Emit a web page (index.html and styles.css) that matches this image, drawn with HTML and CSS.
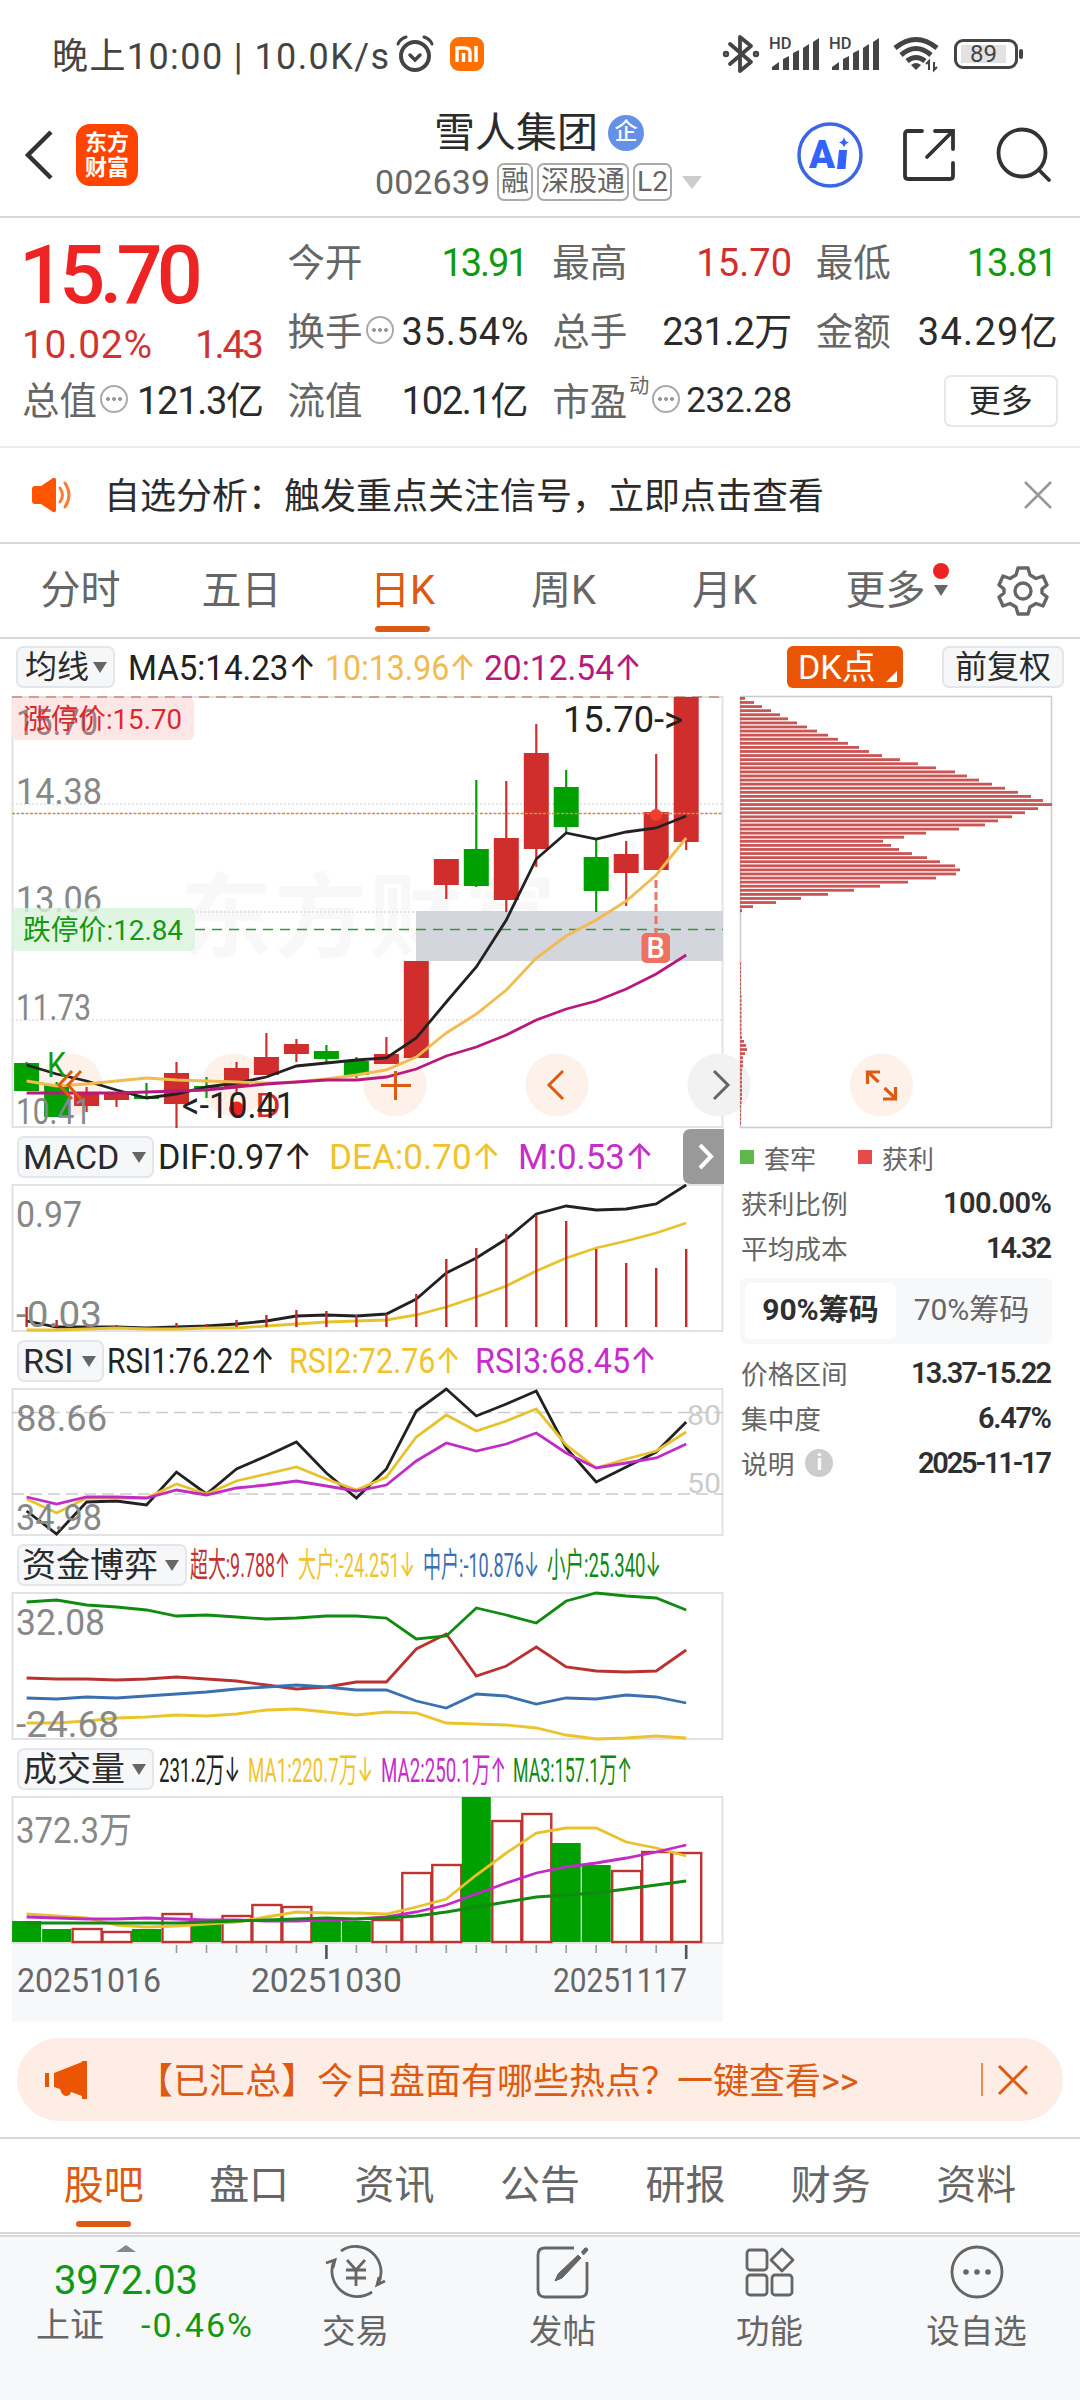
FILE: index.html
```html
<!DOCTYPE html>
<html lang="zh-CN">
<head>
  <meta charset="UTF-8" />
  <meta name="viewport" content="width=device-width, initial-scale=1.0"/>
  <title>雪人集团 002639</title>
  <link rel="stylesheet" href="styles.css">
</head>
<body>
  <div class="status-bar">
    <span class="status-time" data-w="337">晚上10:00 | 10.0K/s</span>
    <svg class="icon-clock" width="38" height="38" viewBox="0 0 38 38" fill="none" stroke="#444" stroke-width="4" stroke-linecap="round"><circle cx="19" cy="21" r="14"/><path d="M14 20l5 5 5-5" stroke-width="3.5"/><path d="M2 9Q4 4 10 2M36 9Q34 4 28 2" stroke-width="3"/></svg>
    <span class="mi"><svg width="24" height="16" viewBox="0 0 24 16" fill="none" stroke="#fff" stroke-width="3.4"><path d="M2 16V2h8q5 0 5 5v9M8.5 16V7M21 16V0"/></svg></span>
    <div class="status-right">
      <svg width="38" height="40" viewBox="0 0 38 40" fill="none" stroke="#444" stroke-width="3.8" stroke-linejoin="round" stroke-linecap="round"><path d="M8 10l21 18-11 9V3l11 9L8 30"/><circle cx="4" cy="20" r="1.3"/><circle cx="34" cy="20" r="1.3"/></svg>
      <svg class="sig1" width="52" height="36" viewBox="0 0 52 36"><text x="0" y="13" class="hd">HD</text><g fill="#444"><path d="M3 34V31L10 26V34Z"/><path d="M14 34V23L20 20V34Z"/><path d="M24 34V17L30 14V34Z"/><path d="M34 34V12L40 8V34Z"/><path d="M44 34V6L50 2V34Z"/></g></svg>
      <svg class="sig2" width="52" height="36" viewBox="0 0 52 36"><text x="0" y="13" class="hd">HD</text><g fill="#444"><path d="M3 34V31L10 26V34Z"/><path d="M14 34V23L20 20V34Z"/><path d="M24 34V17L30 14V34Z"/><path d="M34 34V12L40 8V34Z"/><path d="M44 34V6L50 2V34Z"/></g></svg>
      <svg class="wifi" width="46" height="36" viewBox="0 0 46 36" fill="none" stroke="#444" stroke-width="5"><path d="M2 12Q23-5 44 12"/><path d="M8 19Q23 6 38 19"/><path d="M14 25Q23 18 32 25"/><path d="M23 34l-5-5q5-4 10 0z" fill="#444" stroke="none"/><path d="M36 34v-9l-3 3M41 26v8l3-3" stroke-width="2"/></svg>
      <span class="battery"><span>89</span></span>
    </div>
  </div>

  <div class="header">
    <svg class="back" width="30" height="50" viewBox="0 0 30 50" fill="none" stroke="#333" stroke-width="4.5"><path d="M27 2L4 25l23 23"/></svg>
    <div class="logo">东方<br>财富</div>
    <div class="stock">
      <div class="stock-name">雪人集团<span class="qi">企</span></div>
      <div class="stock-code"><span data-w="115">002639</span><i>融</i><i>深股通</i><i>L2</i><b class="caret"></b></div>
    </div>
    <svg width="66" height="66" viewBox="0 0 66 66"><circle cx="33" cy="33" r="31" fill="#fff" stroke="#3c66e4" stroke-width="3.5"/><text x="12" y="46" class="ai" textLength="26" lengthAdjust="spacingAndGlyphs">A</text><path d="M42 28h8l-1.500 19h-8.500zM47 15q1 5 5 5.500q-4 1-5 5q-1-4-5-5q4-1 5-5.500z" fill="#3463fb"/></svg>
    <svg class="share" width="54" height="54" viewBox="0 0 54 54" fill="none" stroke="#333" stroke-width="3.8" stroke-linecap="round"><path d="M20 3H6q-3 0-3 3v42q0 3 3 3h42q3 0 3-3V35M33 3h18v18M50 4L25 29"/></svg>
    <svg class="search" width="56" height="56" viewBox="0 0 56 56" fill="none" stroke="#333" stroke-width="3.8" stroke-linecap="round"><circle cx="25" cy="26" r="23.500"/><path d="M42 43l10 10"/></svg>
  </div>

  <div class="quote">
    <div class="price">
      <div class="last">15.70</div>
      <div class="change"><span data-w="130">10.02%</span><span data-w="69">1.43</span></div>
    </div>
    <div class="cell"><label>今开</label><span class="green" data-w="87">13.91</span></div>
    <div class="cell"><label>最高</label><span class="red" data-w="96">15.70</span></div>
    <div class="cell"><label>最低</label><span class="green" data-w="91">13.81</span></div>
    <div class="cell"><label>换手</label><u class="dots"></u><span data-w="127">35.54%</span></div>
    <div class="cell"><label>总手</label><span data-w="130">231.2万</span></div>
    <div class="cell"><label>金额</label><span data-w="140">34.29亿</span></div>
    <div class="cell"><label>总值</label><u class="dots"></u><span data-w="127">121.3亿</span></div>
    <div class="cell"><label>流值</label><span data-w="127">102.1亿</span></div>
    <div class="cell pe"><label>市盈<sup>动</sup></label><u class="dots"></u><span class="small" data-w="106">232.28</span></div>
    <div class="cell"><button class="more">更多</button></div>
  </div>

  <div class="notice">
    <svg width="42" height="34" viewBox="0 0 42 34"><path d="M0 11q0-3 3-3h6L21 0q3-1 3 2v30q0 3-3 2L9 26H3q-3 0-3-3z" fill="#ff5500"/><path d="M28 10q5 7 0 14M33 5q8 12 0 24" fill="none" stroke="#ff7a33" stroke-width="3" stroke-linecap="round"/></svg>
    <span>自选分析：触发重点关注信号，立即点击查看</span>
    <svg class="close" width="28" height="28" viewBox="0 0 28 28" stroke="#999" stroke-width="2.600"><path d="M1 1l26 26M27 1L1 27"/></svg>
  </div>

  <div class="tabs">
    <a>分时</a><a>五日</a><a class="active">日K</a><a>周K</a><a>月K</a><a class="tab-more">更多<b class="caret"></b><em></em></a>
    <svg width="50" height="50" viewBox="-25 -25 50 50" fill="none" stroke="#666" stroke-width="3.400" stroke-linejoin="round"><path d="M-5-23H5L7-16L13-12.500L20-15L24-6L19-2V2L24 6L20 15L13 12.500L7 16L5 23H-5L-7 16L-13 12.500L-20 15L-24 6L-19 2V-2L-24-6L-20-15L-13-12.500L-7-16Z"/><circle r="8"/></svg>
  </div>

  <div class="toolbar">
    <button class="pick w1">均线<b class="caret"></b></button>
    <svg class="values" id="maValues" width="672" height="57" viewBox="115 639 672 57"></svg>
    <button class="dk">DK点</button>
    <button class="pick adj">前复权</button>
  </div>

  <div class="body">
    <div class="left">
      <svg class="chart" id="kline" width="740" height="431" viewBox="0 696 740 431"></svg>
      <div class="legend">
        <button class="pick w2">MACD<b class="caret"></b></button>
        <svg class="values" id="macdValues" width="586" height="58" viewBox="154 1127 586 58"></svg>
      </div>
      <svg class="chart" id="macd" width="740" height="146" viewBox="0 1185 740 146"></svg>
      <div class="legend">
        <button class="pick w3">RSI<b class="caret"></b></button>
        <svg class="values" id="rsiValues" width="636" height="58" viewBox="104 1331 636 58"></svg>
      </div>
      <svg class="chart" id="rsi" width="740" height="146" viewBox="0 1389 740 146"></svg>
      <div class="legend">
        <button class="pick w4">资金博弈<b class="caret"></b></button>
        <svg class="values" id="fundValues" width="553" height="58" viewBox="187 1535 553 58"></svg>
      </div>
      <svg class="chart" id="fund" width="740" height="146" viewBox="0 1593 740 146"></svg>
      <div class="legend">
        <button class="pick w2">成交量<b class="caret"></b></button>
        <svg class="values" id="volValues" width="586" height="58" viewBox="154 1739 586 58"></svg>
      </div>
      <svg class="chart" id="vol" width="740" height="225" viewBox="0 1797 740 225"></svg>
    </div>

    <div class="right">
      <svg class="chart" id="chips" width="340" height="431" viewBox="740 696 340 431"></svg>
      <div class="chip-legend"><i class="bg-green"></i>套牢<i class="bg-red"></i>获利</div>
      <div class="row"><span>获利比例</span><b data-w="109">100.00%</b></div>
      <div class="row"><span>平均成本</span><b data-w="66">14.32</b></div>
      <div class="switch"><span class="on">90%筹码</span><span>70%筹码</span></div>
      <div class="row"><span>价格区间</span><b data-w="141">13.37-15.22</b></div>
      <div class="row"><span>集中度</span><b data-w="74">6.47%</b></div>
      <div class="row"><span>说明<i class="info">i</i></span><b data-w="134">2025-11-17</b></div>
    </div>
  </div>

  <div class="banner">
    <svg width="42" height="38" viewBox="0 0 42 38" fill="#ea5504"><path d="M0 12h4v14H0zM9 12L37 1V0h5v38h-5v-3l-11-4q-1 4-5 4t-6-7l-6-2z"/></svg>
    <span>【已汇总】今日盘面有哪些热点？一键查看&gt;&gt;</span>
    <i></i>
    <svg width="30" height="30" viewBox="0 0 30 30" stroke="#e05a12" stroke-width="3"><path d="M1 1l28 28M29 1L1 29"/></svg>
  </div>

  <div class="tabs tabs2">
    <a class="active">股吧</a><a>盘口</a><a>资讯</a><a>公告</a><a>研报</a><a>财务</a><a>资料</a>
  </div>

  <div class="bottom">
    <div class="index">
      <b class="up"></b>
      <div class="index-value green"><span data-w="144">3972.03</span></div>
      <div class="index-row">上证<span class="green" data-w="111">-0.46%</span></div>
    </div>
    <div class="nav">
      <svg width="60" height="54" viewBox="-30 -27 60 54" fill="none" stroke="#666" stroke-width="2.800"><path d="M-15-21A25.500 25.500 0 0 1 22 12M16 20A25.500 25.500 0 0 1-22-11M-30-9L-21-12L-23-4M29 9L21 13L23 5M-9-12L0-2L9-12M0-2V14M-10-2H10M-10 6H10"/></svg>
      交易
    </div>
    <div class="nav">
      <svg width="54" height="54" viewBox="0 0 54 54" fill="none" stroke="#666" stroke-width="2.800"><path d="M38 3H9Q2 3 2 10V45Q2 52 9 52H44Q51 52 51 45V17"/><path d="M45.500 7L49 3Q51 2 52 5L47.500 10ZM42 10L45 13L26 33L19 36L22 29Z" fill="#666" stroke-width="1"/></svg>
      发帖
    </div>
    <div class="nav">
      <svg width="54" height="54" viewBox="0 0 54 54" fill="none" stroke="#666" stroke-width="2.800"><rect x="4" y="5" width="20" height="20" rx="3"/><rect x="4" y="30" width="20" height="20" rx="3"/><rect x="29" y="30" width="20" height="20" rx="3"/><path d="M39 4L50 15L39 26L28 15Z" stroke-linejoin="round"/></svg>
      功能
    </div>
    <div class="nav">
      <svg width="54" height="54" viewBox="0 0 54 54" fill="none" stroke="#666" stroke-width="2.800"><circle cx="27" cy="27" r="25"/><g fill="#666" stroke="none"><circle cx="16" cy="27" r="2.800"/><circle cx="27" cy="27" r="2.800"/><circle cx="38" cy="27" r="2.800"/></g></svg>
      设自选
    </div>
  </div>

  <script>
    const RED = '#cf2e2c', GREEN = '#00a000', BLACK = '#222', YELLOW = '#f0c32c', PURPLE = '#c72ccc';

    // centre of day i
    const X = i => +(26.6 + i * 29.98).toFixed(1);

    function line(points, color, width = 2.8) {
      const pts = points.map((y, i) => X(i) + ',' + y).join(' ');
      return `<polyline points="${pts}" fill="none" stroke="${color}" stroke-width="${width}"/>`;
    }
    function rect(x, y, w, h, fill, extra = '') {
      return `<rect x="${x}" y="${y}" width="${w}" height="${h}" fill="${fill}" ${extra}/>`;
    }
    function seg(x1, y1, x2, y2, color, w = 2, dash = '') {
      return `<line x1="${x1}" y1="${y1}" x2="${x2}" y2="${y2}" stroke="${color}" stroke-width="${w}" stroke-dasharray="${dash}"/>`;
    }
    // text squeezed between x1 and x2
    function text(str, x1, x2, y, color, size = 35) {
      return `<text x="${x1}" y="${y}" fill="${color}" font-size="${size}" textLength="${x2 - x1}" lengthAdjust="spacingAndGlyphs">${str}</text>`;
    }
    function frame(y1, y2) {
      return rect(12.5, y1, 710, y2 - y1, 'none', 'stroke="#e2e2e2" stroke-width="2"');
    }
    function put(id, ...parts) {
      document.getElementById(id).innerHTML = parts.join('');
    }
    const axis = (s, x2, y) => text(s, 16, x2, y, '#888', 36);

    // ---- K line: [color, open/close top, bottom, high, low]
    const candles = [
      ['g',1063,1091,1062,1091], ['g',1085,1117,1082,1117], ['r',1093,1106,1087,1112], ['r',1093,1100,1093,1107],
      ['g',1096,1099,1083,1099], ['r',1073,1104,1062,1128], ['g',1086,1088,1077,1098], ['r',1068,1087,1062,1092],
      ['r',1057,1075,1033,1075], ['r',1044,1054,1039,1062], ['g',1051,1059,1045,1062], ['g',1061,1075,1057,1078],
      ['r',1054,1064,1037,1064], ['r',961,1058,961,1058], ['r',859,885,859,899], ['g',849,886,780,887],
      ['r',838,900,781,912], ['r',753,849,724,867], ['g',787,827,770,833], ['g',857,891,839,912],
      ['r',854,873,841,906], ['r',812,870,754,870], ['r',697,842,697,850]
    ];
    const ma5 = [1065,1074,1081,1090,1098,1094,1087,1083,1077,1066,1063,1060,1058,1038,1002,967,920,859,833,839,832,828,816];
    const ma10 = [1081,1086,1084,1081,1078,1080,1081,1082,1083,1082,1079,1075,1070,1057,1033,1014,990,958,936,920,901,875,838];
    const ma20 = [1093,1093,1093,1093,1092,1091,1090,1087,1084,1082,1080,1080,1077,1069,1056,1047,1035,1020,1009,1001,989,974,955];

    const candleSvg = candles.map((c, i) => {
      const color = c[0] === 'r' ? RED : GREEN;
      return seg(X(i), c[3], X(i), c[4], color, 2.2) + rect(X(i) - 12.5, c[1], 25, c[2] - c[1], color);
    }).join('');
    const circle = (cx, fill = '#fef1ea') => `<circle cx="${cx}" cy="1085" r="31.500" fill="${fill}"/>`;
    const stroke = (d, color = '#dd5a12') => `<path d="${d}" fill="none" stroke="${color}" stroke-width="3"/>`;

    put('kline',
      `<text x="180" y="950" font-size="92" font-weight="700" fill="#f8f8f8" textLength="376">东方财富</text>`,
      frame(697, 1127),
      seg(12, 804, 723, 804, '#ddd', 1.5, '2 2'), seg(12, 912, 723, 912, '#ddd', 1.5, '2 2'), seg(12, 1020, 723, 1020, '#ddd', 1.5, '2 2'),
      rect(12, 698, 182, 42, '#ffe6e6', 'rx="5"'),
      text('15.70', 16, 98, 735, '#9a8080', 36), axis('14.38', 102, 804), axis('13.06', 102, 912), axis('11.73', 91, 1020),
      text('涨停价:15.70', 23, 182, 729, '#d92b2b', 28),
      rect(416, 911, 307, 50, '#d3d6dc'),
      rect(12, 908, 183, 43, '#d9f2dc', 'rx="5" fill-opacity=".8"'),
      text('跌停价:12.84', 23, 183, 940, '#119a11', 28),
      seg(195, 929.5, 723, 929.5, '#2f9a3c', 1.6, '10 7'),
      seg(12, 697, 723, 697, '#c98a78', 1.6, '10 7'),
      circle(71), circle(233), circle(395), circle(557), circle(719, '#f2f2f2'),
      candleSvg,
      seg(12, 813.5, 723, 813.5, '#d08a50', 1.6, '3 1.500'),
      line(ma5, BLACK), line(ma10, '#f2bb50'), line(ma20, '#b8197c'),
      text('K', 47, 66, 1077, '#119a11', 35),
      axis('10.41', 91, 1124),
      stroke('M72 1071L59 1085L72 1099M81 1071L68 1085L81 1099'),
      stroke('M381 1085.500H411M395.500 1071V1100'),
      stroke('M563 1071L549 1085L563 1099'),
      stroke('M714 1071L728 1085L714 1099', '#666'),
      '<circle cx="236.500" cy="1109" r="7.500" fill="#e8231c"/>',
      text('D', 255, 281, 1117, '#d02d28', 34),
      text('&lt;-10.41', 182, 295, 1118, BLACK, 36),
      text('15.70-&gt;', 563, 683, 732, BLACK, 36),
      '<circle cx="656" cy="815" r="6" fill="#f0402c"/>',
      seg(656, 880, 656, 933, '#ee7468', 3, '8 4'),
      rect(641.5, 933, 28.5, 30, '#ee7161', 'rx="5"'),
      '<text x="646.500" y="958" font-size="29" fill="#fff" font-weight="500">B</text>'
    );

    put('maValues',
      text('MA5:14.23↑', 128, 316, 680, BLACK), text('10:13.96↑', 325, 476, 680, '#f2bb50'), text('20:12.54↑', 484, 642, 680, '#b8197c'));

    // ---- MACD
    const hist = [1307,1320,1324,1325,1327,1323,1324,1320,1315,1310,1311,1315,1314,1294,1259,1248,1234,1215,1221,1249,1263,1268,1249];
    const dif = [1321,1327,1327,1327,1328,1327,1326,1324,1321,1316,1315,1316,1314,1299,1273,1258,1239,1214,1206,1210,1209,1204,1185];
    const dea = [1330,1330,1329,1328,1329,1329,1328,1328,1326,1324,1322,1321,1320,1315,1307,1297,1286,1271,1258,1248,1241,1233,1223];
    put('macd', frame(1185, 1331),
      line(dif, BLACK), line(dea, '#e8c22c'),
      hist.map((y, i) => seg(X(i), y, X(i), 1327, '#c02c2a', 2.4)).join(''),
      axis('0.97', 82, 1227), axis('-0.03', 102, 1327));
    put('macdValues',
      text('DIF:0.97↑', 158, 312, 1169, BLACK), text('DEA:0.70↑', 329, 501, 1169, YELLOW), text('M:0.53↑', 518, 654, 1169, PURPLE),
      '<path d="M724 1129V1184H691Q683 1184 683 1176V1137Q683 1129 691 1129Z" fill="#999"/>',
      '<path d="M700 1145L711 1156.500L700 1168" fill="none" stroke="#fff" stroke-width="4"/>');

    // ---- RSI
    const rsi1 = [1511,1534,1502,1501,1505,1472,1494,1469,1456,1442,1473,1498,1469,1411,1389,1416,1404,1391,1448,1482,1467,1452,1422];
    const rsi2 = [1499,1513,1498,1498,1498,1484,1494,1481,1474,1467,1479,1490,1477,1437,1415,1431,1421,1409,1445,1468,1459,1451,1432];
    const rsi3 = [1497,1504,1497,1497,1498,1490,1495,1488,1485,1481,1486,1491,1485,1461,1443,1451,1444,1433,1453,1468,1463,1458,1444];
    put('rsi', frame(1389, 1535),
      seg(12, 1412.5, 723, 1412.5, '#ccc', 1.6, '12 6'), seg(12, 1494, 723, 1494, '#ccc', 1.6, '12 6'),
      text('80', 687, 721, 1425, '#ccc', 28), text('50', 687, 721, 1493, '#ccc', 28),
      line(rsi1, BLACK), line(rsi2, '#e8c22c'), line(rsi3, '#c02cc4'),
      axis('88.66', 107, 1431), axis('34.98', 102, 1530));
    put('rsiValues',
      text('RSI1:76.22↑', 107, 275, 1373, BLACK), text('RSI2:72.76↑', 289, 461, 1373, YELLOW), text('RSI3:68.45↑', 475, 657, 1373, PURPLE));

    // ---- 资金博弈
    const small = [1602,1600,1605,1607,1610,1616,1615,1617,1619,1618,1616,1616,1618,1639,1636,1608,1615,1623,1601,1593,1596,1598,1610];
    const huge = [1678,1679,1679,1680,1679,1677,1679,1681,1685,1689,1687,1682,1682,1649,1634,1676,1666,1647,1667,1671,1672,1671,1650];
    const mid = [1698,1699,1697,1698,1696,1694,1692,1689,1687,1685,1687,1690,1690,1701,1708,1694,1696,1704,1698,1699,1695,1697,1703];
    const big = [1723,1723,1721,1718,1717,1715,1716,1714,1710,1709,1712,1715,1712,1713,1723,1724,1725,1728,1735,1739,1738,1736,1738];
    put('fund', frame(1593, 1739),
      line(huge, '#b83232'), line(big, '#ecc42c'), line(mid, '#3a70b0'), line(small, '#118a11'),
      axis('32.08', 105, 1635), axis('-24.68', 119, 1737));
    put('fundValues',
      text('超大:9.788↑', 190, 290, 1577, '#c03434', 34), text('大户:-24.251↓', 298, 415, 1577, YELLOW, 34),
      text('中户:-10.876↓', 423, 539, 1577, '#3a70b0', 34), text('小户:25.340↓', 547, 661, 1577, '#118a11', 34));

    // ---- 成交量
    const vols = [1921,1929,1928,1931,1929,1913,1924,1915,1904,1906,1917,1921,1919,1872,1864,1797,1820,1813,1843,1865,1870,1851,1852];
    const volColor = 'ggrrgrgrrrggrrrgrrggrrr';
    const v1 = [1914,1916,1918,1925,1927,1926,1924,1922,1917,1912,1913,1913,1914,1907,1899,1875,1853,1833,1828,1828,1842,1848,1856];
    const v2 = [1917,1918,1919,1919,1918,1919,1920,1920,1921,1921,1920,1919,1917,1912,1905,1894,1883,1873,1867,1863,1858,1852,1845];
    const v3 = [1923,1923,1923,1923,1923,1923,1922,1921,1920,1919,1918,1919,1918,1916,1912,1907,1902,1897,1895,1893,1889,1885,1881];
    let ticks = '';
    for (let i = 5; i < 23; i++) {
      const long = i === 10 || i === 22;
      ticks += seg(X(i), 1945, X(i), long ? 1959 : 1953, long ? '#555' : '#999', long ? 2.6 : 1.6);
    }
    put('vol', frame(1797, 1943),
      vols.map((y, i) => volColor[i] === 'g'
        ? rect(X(i) - 14.5, y, 29, 1942 - y, GREEN)
        : rect(X(i) - 14, y + 1, 29, 1941 - y, '#fff', 'stroke="#bf3331" stroke-width="2.400"')).join(''),
      line(v1, '#e8c22c'), line(v2, '#c02cc4'), line(v3, '#118a11'),
      axis('372.3万', 132, 1843),
      rect(12, 1944, 711, 78, '#f7f8fa'), ticks,
      text('20251016', 17, 161, 1992, '#666', 34), text('20251030', 251, 402, 1992, '#666', 34), text('20251117', 553, 687, 1992, '#666', 34));
    put('volValues',
      text('231.2万↓', 159, 240, 1782, BLACK, 34), text('MA1:220.7万↓', 248, 373, 1782, YELLOW, 34),
      text('MA2:250.1万↑', 381, 506, 1782, PURPLE, 34), text('MA3:157.1万↑', 513, 632, 1782, '#118a11', 34));

    // ---- 筹码分布, one bar per price step
    const chips = [5,14,22,31,40,48,57,67,77,88,98,108,119,129,142,160,178,196,215,227,239,252,265,278,291,303,312,298,285,272,258,245,219,
      186,164,143,151,159,172,187,200,215,220,216,196,168,140,114,88,61,36,13,2,
      0,0,0,0,0,0,0,0,0,0,0,0,1,1,1,1,1,1,1,1,1.5,1.5,1.5,1.5,1.5,1.5,1.5,1.5,1.5,1.5,2,4,6,7,5,3,3,3,2,2,2,2,2,2,2,2,1.5,1,1,1,1,1];
    put('chips',
      rect(740.5, 696.5, 311, 431, 'none', 'stroke="#ccc" stroke-width="1.600"'),
      chips.map((w, i) => rect(740, (697 + i * 4.083).toFixed(2), w, 2.8, '#cb5454')).join(''),
      circle(881.5),
      '<path d="M878.500 1082L868 1072M867.500 1084V1072H880M884.500 1088L895 1098M895.500 1087V1099H883" fill="none" stroke="#dd5a12" stroke-width="3.200"/>');

    // fit figures to their column by tracking
    document.querySelectorAll('[data-w]').forEach(el => {
      const n = el.textContent.length;
      const gap = (el.dataset.w - el.getBoundingClientRect().width) / (n - 1);
      el.style.letterSpacing = gap.toFixed(2) + 'px';
      el.style.marginRight = (-gap).toFixed(2) + 'px';
    });
  </script>
</body>
</html>
```
FILE: styles.css
```css
* {
  box-sizing: border-box;
}

body {
  margin: 0;
  width: 1080px;
  height: 2400px;
  overflow: hidden;
  background: #fff;
  color: #2b2b2b;
  font-family: Roboto, Inter, "Noto Sans CJK SC", sans-serif;
}

svg {
  display: block;
  flex: none;
  overflow: visible;
}

i, u, em {
  font-style: normal;
  text-decoration: none;
}

button {
  font-family: inherit;
  color: inherit;
  padding: 0;
}

span {
  white-space: nowrap;
}

.green { color: #119a11 !important; }
.red { color: #d02f2f !important; }

.caret {
  display: inline-block;
  border: 7px solid transparent;
  border-top: 11px solid #666;
  border-bottom: 0;
}

/* status bar */
.status-bar {
  height: 108px;
  padding: 0 57px 0 52px;
  display: flex;
  align-items: center;
  font-size: 36px;
  color: #444;
}

.status-time {
  padding-bottom: 3px;
}

.icon-clock {
  margin-left: 7px;
}

.mi {
  width: 34px;
  height: 34px;
  margin-left: 16px;
  border-radius: 9px;
  background: #ff6f00;
  display: flex;
  align-items: center;
  justify-content: center;
}

.status-right {
  margin-left: auto;
  display: flex;
  align-items: center;
}

.hd {
  font-size: 16.500px;
  font-weight: 500;
  fill: #444;
}

.sig1 { margin-left: 9px; }
.sig2 { margin-left: 8px; }
.wifi { margin-left: 12px; }

.battery {
  position: relative;
  width: 64px;
  height: 30px;
  margin: 0 5px 0 15px;
  border: 3px solid #444;
  border-radius: 9px;
  font-size: 24px;
  text-align: center;
}

.battery span {
  display: block;
  margin: 3px 9px 3px 4px;
  background: #e2e2e2;
  line-height: 18px;
}

.battery::after {
  content: "";
  position: absolute;
  right: -8px;
  top: 7px;
  width: 4px;
  height: 10px;
  border-radius: 2px;
  background: #444;
}

/* header */
.header {
  height: 110px;
  padding: 0 0 14px 24px;
  display: flex;
  align-items: center;
  border-bottom: 2px solid #d8d8d8;
}

.logo {
  flex: none;
  width: 62px;
  height: 62px;
  margin-left: 22px;
  border-radius: 14px;
  background: #ff4400;
  color: #fff;
  font-size: 22px;
  font-weight: 700;
  line-height: 25px;
  padding-top: 6px;
  text-align: center;
}

.stock {
  flex: none;
  width: 330px;
  margin: 0 92px 0 237px;
}

.stock-name {
  display: flex;
  align-items: center;
  padding-left: 59px;
  font-size: 41px;
  line-height: 48px;
}

.qi {
  width: 36px;
  height: 36px;
  margin-left: 10px;
  border-radius: 50%;
  background: #6590e8;
  color: #fff;
  font-size: 23px;
  font-weight: 500;
  line-height: 34px;
  text-align: center;
}

.stock-code {
  display: flex;
  align-items: center;
  margin-top: 6px;
  font-size: 34px;
  line-height: 38px;
  color: #666;
}

.stock-code i {
  height: 38px;
  margin-left: 4px;
  padding: 0 2px;
  border: 2px solid #aaa;
  border-radius: 7px;
  font-size: 28px;
  line-height: 33px;
  white-space: nowrap;
}

.stock-code span + i {
  margin-left: 7px;
}

.stock-code .caret {
  margin-left: 10px;
  border-width: 13px 10px 0;
  border-top-color: #ccc;
}

.ai {
  font: 900 38px Roboto, sans-serif;
  fill: #3463fb;
}

.share { margin-left: 39px; }
.search { margin-left: 41px; }

/* quote */
.quote {
  height: 230px;
  padding: 10px 22px 13px;
  display: grid;
  grid-template-columns: 242px 241px 240px 242px;
  grid-template-rows: repeat(3, 69px);
  column-gap: 23.600px;
  border-bottom: 2px solid #ececec;
}

.price {
  grid-row: span 2;
}

.last {
  padding-top: 8px;
  margin-left: -3px;
  font-size: 81px;
  font-weight: 500;
  line-height: 80px;
  letter-spacing: -5.700px;
  color: #ee2323;
}

.change {
  display: flex;
  justify-content: space-between;
  padding-top: 6px;
  font-size: 39px;
  line-height: 46px;
  color: #cf3333;
}

.cell {
  display: flex;
  align-items: center;
  justify-content: space-between;
  font-size: 38px;
  line-height: 46px;
  color: #2b2b2b;
}

.cell label {
  color: #666;
  font-size: 37.500px;
  white-space: nowrap;
}

.cell sup {
  font-size: 20px;
  line-height: 20px;
  vertical-align: 22px;
  margin-left: 2px;
}

.cell .small {
  font-size: 35px;
}

.dots {
  flex: none;
  width: 28px;
  height: 28px;
  margin: 0 auto 4px 3px;
  border: 2px solid #aaa;
  border-radius: 50%;
  background: radial-gradient(circle, #999 1.800px, transparent 2.200px) 50% 50% / 6px 24px repeat-x content-box;
  padding: 0 3px;
}

.more {
  width: 114px;
  height: 52px;
  margin-left: auto;
  border: 2px solid #e6e7ea;
  border-radius: 7px;
  background: #fff;
  font-size: 32px;
  line-height: 46px;
}

/* notice */
.notice {
  height: 96px;
  padding: 0 28px 0 32px;
  display: flex;
  align-items: center;
  font-size: 36px;
  border-bottom: 2px solid #d8d8d8;
}

.notice span {
  margin-left: 30px;
  padding-bottom: 4px;
}

.close {
  margin-left: auto;
}

/* tabs */
.tabs {
  height: 95px;
  display: flex;
  align-items: center;
  border-bottom: 2px solid #d8d8d8;
  font-size: 40px;
  color: #666;
}

.tabs a {
  position: relative;
  width: 161px;
  line-height: 94px;
  text-align: center;
}

.tabs .active {
  color: #dd5a12;
}

.tabs .active::after {
  content: "";
  position: absolute;
  left: 50%;
  bottom: 6px;
  width: 55px;
  height: 6px;
  margin-left: -27.500px;
  border-radius: 3px;
  background: #dd5a12;
}

.tabs svg {
  margin-left: 32px;
}

.tab-more .caret {
  position: absolute;
  right: 18px;
  top: 41px;
}

.tab-more em {
  position: absolute;
  right: 17px;
  top: 19px;
  width: 16px;
  height: 16px;
  border-radius: 50%;
  background: #ee2222;
}

/* chart area */
.toolbar {
  height: 57px;
  padding-left: 16px;
  display: flex;
}

.pick {
  flex: none;
  height: 42px;
  border: 2px solid #e3e6ea;
  border-radius: 7px;
  background: #f6f7f9;
  font-size: 34px;
  line-height: 38px;
  padding-left: 4px;
  display: flex;
  align-items: center;
  white-space: nowrap;
}

.toolbar .pick {
  margin-top: 7px;
  font-size: 32px;
}

.pick .caret {
  margin: 0 6px 0 auto;
}

.w1 { width: 99px; padding-left: 7px; }
.w2 { width: 137px; }
.w3 { width: 87px; }
.w4 { width: 170px; padding-left: 3px; }

.dk {
  position: relative;
  width: 116px;
  height: 42px;
  margin-top: 7px;
  border: 0;
  border-radius: 6px;
  background: #ea5504;
  color: #fff;
  font-size: 34px;
  line-height: 40px;
  text-align: left;
  padding-left: 11px;
}

.dk::after {
  content: "";
  position: absolute;
  right: 6px;
  bottom: 6px;
  border-left: 11px solid transparent;
  border-bottom: 11px solid #fff;
}

.toolbar .adj {
  width: 122px;
  margin-left: 39px;
  padding-left: 11px;
}

.body {
  display: flex;
}

.left {
  width: 740px;
}

.legend {
  height: 58px;
  padding-left: 17px;
  display: flex;
}

.legend .pick {
  margin-top: 9px;
}

/* chip distribution */
.right {
  width: 312px;
  font-size: 27px;
  color: #666;
}

.chip-legend {
  height: 54px;
  padding-top: 6px;
  display: flex;
  align-items: center;
  font-size: 26px;
}

.chip-legend i {
  width: 14px;
  height: 14px;
  margin-right: 10px;
}

.bg-green { background: #5db947; }
.bg-red { background: #e84a4a; margin-left: 42px; }

.row {
  height: 45px;
  padding: 0 0 2px 1px;
  display: flex;
  align-items: center;
  justify-content: space-between;
}

.row b {
  font-size: 29px;
  font-weight: 600;
  color: #2f2f2f;
  white-space: nowrap;
}

.row span {
  display: flex;
  align-items: center;
  font-size: 26.700px;
}

.switch {
  height: 66px;
  margin: 7px 0;
  padding: 5px;
  display: flex;
  border-radius: 6px;
  background: #f7f8fa;
  font-size: 30px;
  line-height: 54px;
  text-align: center;
}

.switch span {
  flex: 1;
}

.switch .on {
  border-radius: 6px;
  background: #fff;
  color: #2f2f2f;
  font-weight: 700;
}

.info {
  width: 28px;
  height: 28px;
  margin-left: 11px;
  border-radius: 50%;
  background: #ccc;
  color: #fff;
  font-size: 22px;
  font-weight: 700;
  line-height: 28px;
  text-align: center;
}

/* banner */
.banner {
  height: 83px;
  margin: 16px 17px;
  padding: 0 35px 0 28px;
  display: flex;
  align-items: center;
  border-radius: 42px;
  background: #fdede4;
  color: #dd5a12;
  font-size: 36px;
}

.banner span {
  margin-left: 50px;
  padding-bottom: 4px;
}

.banner i {
  width: 2px;
  height: 33px;
  margin: 0 15px 0 auto;
  background: #e88a58;
}

.tabs2 {
  height: 97px;
  padding: 0 31px;
  border-top: 2px solid #d8d8d8;
}

.tabs2 a {
  flex: 1;
}

/* bottom bar */
.bottom {
  height: 166px;
  margin-top: 1px;
  display: flex;
  border-top: 2px solid #d8d8d8;
  background: #f7f8fa;
}

.index {
  width: 252px;
  padding-top: 8px;
  display: flex;
  flex-direction: column;
  align-items: center;
}

.up {
  border: 10px solid transparent;
  border-top: 0;
  border-bottom: 7px solid #888;
}

.index-value {
  margin-top: 6px;
  font-size: 40px;
  line-height: 46px;
}

.index-row {
  width: 252px;
  padding-left: 36px;
  display: flex;
  align-items: center;
  gap: 37px;
  font-size: 34px;
  line-height: 42px;
  color: #666;
}

.nav {
  width: 207px;
  padding-top: 8px;
  display: flex;
  flex-direction: column;
  align-items: center;
  gap: 10px;
  font-size: 33.500px;
  line-height: 46px;
  color: #666;
}
```
